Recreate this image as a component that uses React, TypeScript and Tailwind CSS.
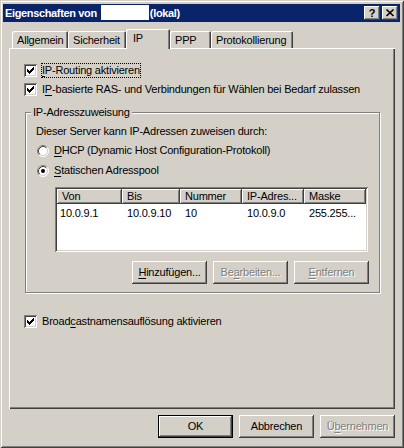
import React from "react";

const raised =
  "shadow-[inset_-1px_-1px_#404040,inset_1px_1px_#fff,inset_-2px_-2px_#808080]";
const sunken =
  "shadow-[inset_1px_1px_#808080,inset_-1px_-1px_#fff,inset_2px_2px_#404040,inset_-2px_-2px_#d4d0c8]";
const grayText = "text-[#808080] [text-shadow:1px_1px_0_#fff]";

function Check({ checked }: { checked?: boolean }) {
  return (
    <span className={`block w-[13px] h-[13px] shrink-0 bg-white ${sunken}`}>
      {checked && (
        <svg width="13" height="13" viewBox="0 0 13 13" shapeRendering="crispEdges">
          <path
            d="M3 5h1v3H3zM4 6h1v3H4zM5 7h1v3H5zM6 6h1v3H6zM7 5h1v3H7zM8 4h1v3H8zM9 3h1v3H9z"
            fill="#000"
          />
        </svg>
      )}
    </span>
  );
}

function Radio({ checked }: { checked?: boolean }) {
  return (
    <svg width="12" height="12" viewBox="0 0 12 12" className="shrink-0">
      <circle cx="6" cy="6" r="5" fill="#fff" />
      <path d="M2.11 9.89A5.5 5.5 0 0 1 9.89 2.11" stroke="#808080" fill="none" />
      <path d="M9.89 2.11A5.5 5.5 0 0 1 2.11 9.89" stroke="#fff" fill="none" />
      <path d="M2.82 9.18A4.5 4.5 0 0 1 9.18 2.82" stroke="#404040" fill="none" />
      <path d="M9.18 2.82A4.5 4.5 0 0 1 2.82 9.18" stroke="#d4d0c8" fill="none" />
      {checked && <circle cx="6" cy="6" r="2" fill="#000" />}
    </svg>
  );
}

function Btn({
  children,
  disabled,
  isDefault,
}: {
  children: React.ReactNode;
  disabled?: boolean;
  isDefault?: boolean;
}) {
  return (
    <div
      className={`w-[75px] h-[23px] flex items-center justify-center bg-[#d4d0c8] ${raised} ${
        isDefault ? "border border-black" : ""
      } ${disabled ? grayText : ""}`}
    >
      {children}
    </div>
  );
}

function U({ children }: { children: React.ReactNode }) {
  return <span className="underline underline-offset-[2px]">{children}</span>;
}

const tabs: [string, number][] = [
  ["Allgemein", 56],
  ["Sicherheit", 58],
  ["IP", 44],
  ["PPP", 41],
  ["Protokollierung", 82],
];

const cols: [string, number][] = [
  ["Von", 65],
  ["Bis", 58],
  ["Nummer", 62],
  ["IP-Adres...", 62],
  ["Maske", 62],
];

const row = ["10.0.9.1", "10.0.9.10", "10", "10.0.9.0", "255.255..."];

export default function App() {
  return (
    <div className="w-[404px] h-[448px] bg-[#d4d0c8] font-['Liberation_Sans',Arial,sans-serif] text-[11px] leading-[13px] tracking-[-0.2px] text-black pt-[4px] pl-[3px] pr-[4px] overflow-hidden select-none shadow-[inset_1px_1px_#d4d0c8,inset_-1px_-1px_#404040,inset_2px_2px_#fff,inset_-2px_-2px_#808080]">
      {/* title bar */}
      <div className="h-[18px] bg-[#0a246a] flex items-center pl-[2px] pr-[2px] text-white font-bold tracking-[-0.35px]">
        <span>Eigenschaften von</span>
        <span className="ml-[4px] w-[48px] h-[15px] bg-white -mt-[2px]" />
        <span className="ml-[1px]">(lokal)</span>
        <div className="ml-auto flex gap-[2px] tracking-normal">
          <div className={`w-[16px] h-[14px] bg-[#d4d0c8] ${raised} flex items-center justify-center text-black font-bold text-[11px]`}>
            ?
          </div>
          <div className={`w-[16px] h-[14px] bg-[#d4d0c8] ${raised} flex items-center justify-center`}>
            <svg width="16" height="14" viewBox="0 0 16 14">
              <path d="M4.5 3.5l7 6.5M11.5 3.5l-7 6.5" stroke="#000" strokeWidth="1.7" />
            </svg>
          </div>
        </div>
      </div>

      {/* tabs */}
      <div className="mt-[7px] ml-[9px] h-[19px] flex items-end">
        {tabs.map(([label, w], i) =>
          i === 2 ? (
            <div
              key={label}
              style={{ width: w }}
              className="relative z-10 h-[20px] -mb-[1px] bg-[#d4d0c8] rounded-t-[2px] pl-[7px] pt-[3px] shadow-[inset_1px_1px_#fff,inset_-1px_0_#404040,inset_-2px_0_#808080]"
            >
              {label}
            </div>
          ) : (
            <div
              key={label}
              style={{ width: w }}
              className="h-[17px] bg-[#d4d0c8] rounded-t-[2px] pl-[5px] pt-[3px] shadow-[inset_1px_1px_#fff,inset_-1px_0_#404040,inset_-2px_0_#808080]"
            >
              {label}
            </div>
          )
        )}
      </div>

      {/* tab panel */}
      <div className="ml-[6px] w-[386px] h-[361px] flex flex-col pt-[16px] pl-[15px] shadow-[inset_1px_1px_#fff,inset_-1px_-1px_#404040,inset_-2px_-2px_#808080]">
        <div className="flex items-center h-[13px]">
          <Check checked />
          <span className="ml-[4px] border border-dotted border-black leading-[13px]">
            <U>I</U>P-Routing aktivieren
          </span>
        </div>
        <div className="flex items-center h-[13px] mt-[6px]">
          <Check checked />
          <span className="ml-[5px]">
            I<U>P</U>-basierte RAS- und Verbindungen für Wählen bei Bedarf zulassen
          </span>
        </div>

        {/* group box */}
        <div className="relative mt-[16px] ml-[1px] w-[355px] h-[181px] border border-[#808080] shadow-[inset_1px_1px_#fff,1px_1px_#fff] pt-[12px] pl-[10px]">
          <span className="absolute -top-[7px] left-[5px] px-[2px] bg-[#d4d0c8] leading-[13px]">
            IP-Adresszuweisung
          </span>
          <div className="h-[13px]">Dieser Server kann IP-Adressen zuweisen durch:</div>
          <div className="flex items-center h-[13px] mt-[6px] ml-[1px]">
            <Radio />
            <span className="ml-[5px]">
              <U>D</U>HCP (Dynamic Host Configuration-Protokoll)
            </span>
          </div>
          <div className="flex items-center h-[13px] mt-[7px] ml-[1px]">
            <Radio checked />
            <span className="ml-[5px]">
              <U>S</U>tatischen Adresspool
            </span>
          </div>

          {/* list view */}
          <div className={`mt-[10px] ml-[19px] w-[313px] h-[65px] bg-white p-[2px] ${sunken}`}>
            <div className="flex h-[15px] overflow-hidden">
              {cols.map(([c, w]) => (
                <div
                  key={c}
                  style={{ width: w }}
                  className={`shrink-0 h-[15px] bg-[#d4d0c8] pl-[5px] pt-[1px] ${raised}`}
                >
                  {c}
                </div>
              ))}
            </div>
            <div className="flex h-[13px] mt-[3px]">
              {row.map((v, i) => (
                <div
                  key={i}
                  style={{ width: cols[i][1] }}
                  className={`shrink-0 ${i === 0 ? "pl-[3px]" : "pl-[5px]"}`}
                >
                  {v}
                </div>
              ))}
            </div>
          </div>

          <div className="mt-[9px] w-[333px] flex justify-end gap-[6px]">
            <Btn>
              <U>H</U>inzufügen...
            </Btn>
            <Btn disabled>
              Be<U>a</U>rbeiten...
            </Btn>
            <Btn disabled>
              <U>E</U>ntfernen
            </Btn>
          </div>
        </div>

        <div className="flex items-center h-[13px] mt-[22px]">
          <Check checked />
          <span className="ml-[5px]">
            Broad<U>c</U>astnamensauflösung aktivieren
          </span>
        </div>
      </div>

      {/* dialog buttons */}
      <div className="mt-[6px] mr-[5px] flex justify-end gap-[6px]">
        <Btn isDefault>OK</Btn>
        <Btn>Abbrechen</Btn>
        <Btn disabled>
          Ü<U>b</U>ernehmen
        </Btn>
      </div>
    </div>
  );
}
